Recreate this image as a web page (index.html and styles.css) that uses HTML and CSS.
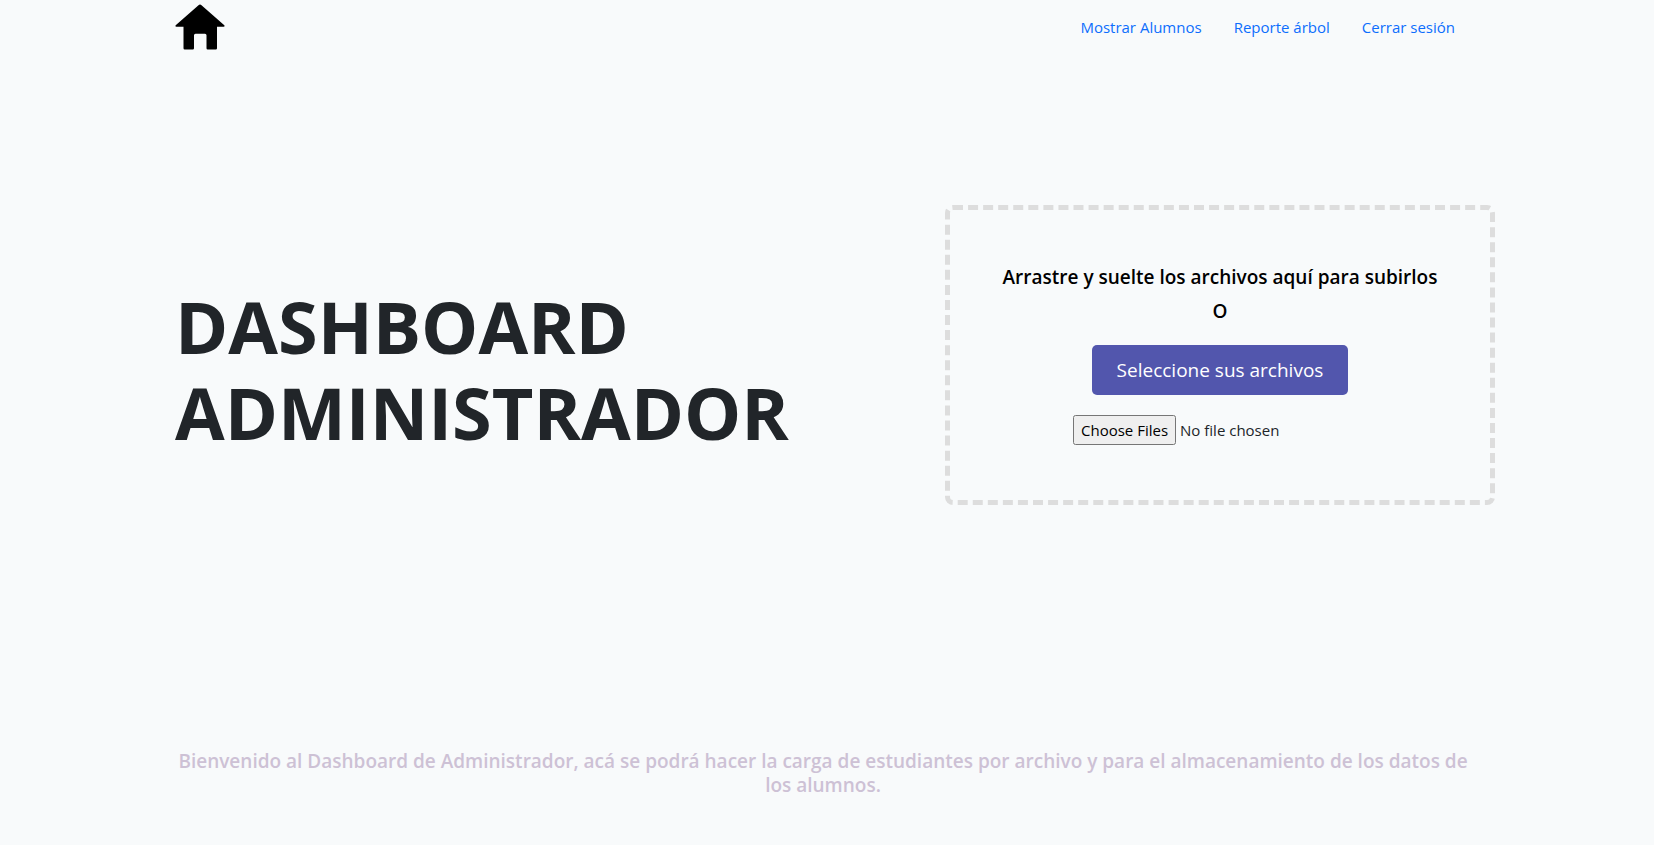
FILE: index.html
```html
<!DOCTYPE html>
<html lang="es">
<head>
<meta charset="utf-8">
<meta name="viewport" content="width=device-width, initial-scale=1">
<title>Dashboard Administrador</title>
<link rel="stylesheet" href="styles.css">
</head>
<body>
<div class="page">
  <header class="topbar">
    <a class="logo" href="#" aria-label="Inicio">
      <svg viewBox="0 0 50 46" width="50" height="46" aria-hidden="true">
        <path d="M23.500 1.200Q25 0 26.500 1.200L49.300 21.200Q50.200 22.600 48.600 22.800H42V44.200Q42 45.400 40.800 45.400H32.700Q31.500 45.400 31.500 44.200V31.200Q31.500 29.700 30 29.700H20.500Q19 29.700 19 31.200V44.200Q19 45.400 17.800 45.400H9.700Q8.500 45.400 8.500 44.200V22.800H1.400Q-.2 22.600 .7 21.200Z"/>
      </svg>
    </a>
    <nav class="menu">
      <a href="#">Mostrar Alumnos</a>
      <a href="#">Reporte árbol</a>
      <a href="#">Cerrar sesión</a>
    </nav>
  </header>
  <main>
    <section class="hero">
      <h1 class="title">DASHBOARD ADMINISTRADOR</h1>
      <form class="drop-area">
        <h2 class="drop-text">Arrastre y suelte los archivos aquí para subirlos</h2>
        <span class="drop-text">O</span>
        <button class="select-button" type="button">Seleccione sus archivos</button>
        <input class="file-input" type="file" aria-label="Archivos" multiple>
      </form>
    </section>
    <p class="welcome">Bienvenido al Dashboard de Administrador, acá se podrá hacer la carga de estudiantes por archivo y para el almacenamiento de los datos de los alumnos.</p>
  </main>
</div>
</body>
</html>
```
FILE: styles.css
```css
* {
  box-sizing: border-box;
}

body {
  margin: 0;
  background: #f8fafb;
  color: #212529;
  font-family: "Segoe UI", "Open Sans", "Noto Sans", sans-serif;
  font-size: 15px;
  line-height: 24px;
}

.page {
  max-width: 1304px;
  margin: 0 auto;
}

.topbar {
  display: flex;
  align-items: center;
  justify-content: space-between;
  padding: 4px 24px 4px 0;
}

.logo {
  display: flex;
  color: #000;
}

.menu {
  display: flex;
  gap: 32px;
}

.menu a {
  color: #0d6efd;
  text-decoration: none;
}

.hero {
  display: flex;
  align-items: center;
  justify-content: space-between;
  gap: 32px;
  min-height: 602px;
  margin-right: -16px;
}

.title {
  flex: 1;
  max-width: 640px;
  margin: 28px 0 0;
  font-size: 72px;
  font-weight: 700;
  line-height: 86px;
}

.drop-area {
  display: flex;
  flex-direction: column;
  align-items: center;
  justify-content: center;
  width: 550px;
  min-height: 300px;
  border: 5px dashed #ddd;
  border-radius: 8px;
}

.drop-text {
  margin: 0 0 10px;
  color: #000;
  font-size: 19px;
  font-weight: 600;
  line-height: 24px;
}

.select-button {
  margin: 12px 0 20px;
  padding: 10px 25px;
  border: 0;
  border-radius: 5px;
  background: #5256ad;
  color: #fff;
  font-family: inherit;
  font-size: 19px;
  line-height: 30px;
}

.file-input {
  width: 294px;
  font-family: inherit;
  font-size: 15px;
  line-height: 24px;
}

.file-input::file-selector-button {
  padding: 3px 6px;
  font-family: inherit;
  font-size: 15px;
  line-height: 24px;
}

.welcome {
  margin: 93px 8px 0 0;
  color: #cdc1d5;
  font-size: 19px;
  font-weight: 600;
  line-height: 24px;
  text-align: center;
}
```
